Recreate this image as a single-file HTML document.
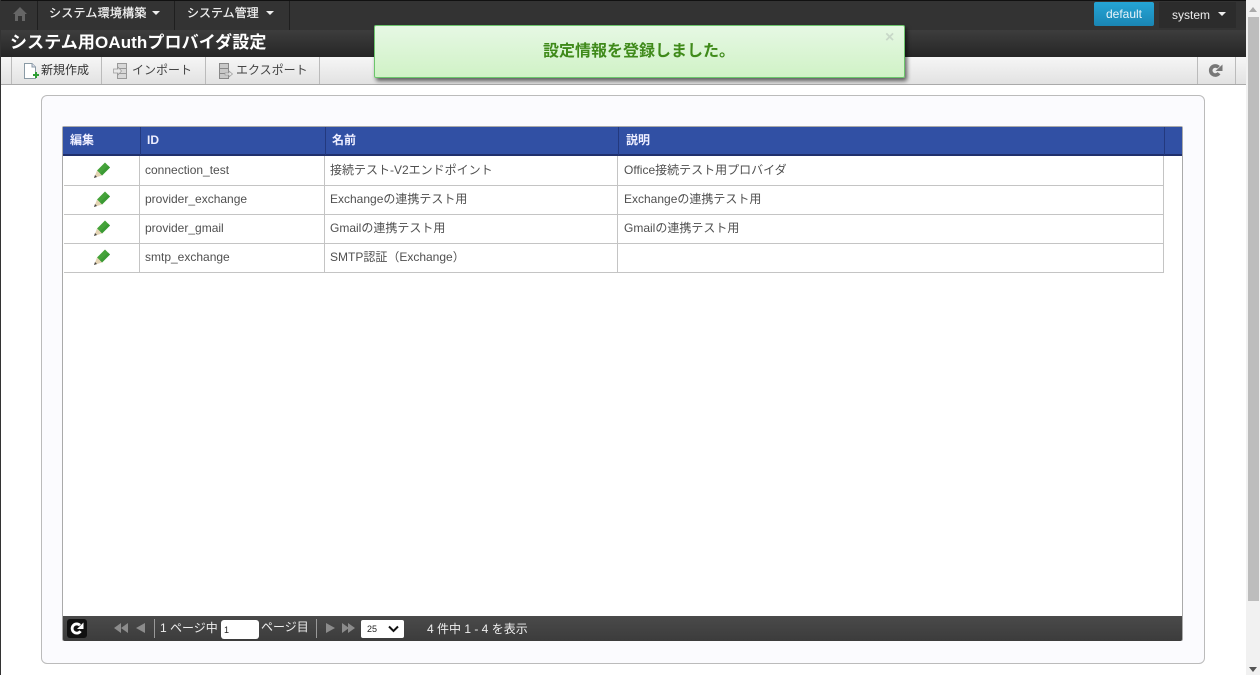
<!DOCTYPE html>
<html lang="ja"><head><meta charset="utf-8"><title>システム用OAuthプロバイダ設定</title>
<style>
html,body{margin:0;padding:0;width:1260px;height:675px;overflow:hidden;background:#fff}
body{position:relative;font-family:"Liberation Sans","Noto Sans CJK JP",sans-serif;color:#444}
.a{position:absolute;white-space:nowrap}
.sep{position:absolute;width:1px}
svg{position:absolute;display:block}
.caret{position:absolute;width:0;height:0;border-left:4px solid transparent;border-right:4px solid transparent;border-top:4px solid #eee}
.hl{position:absolute;height:1px;left:64px;width:1100px;background:#c4c4c4}
.vl{position:absolute;width:1px;top:156px;height:116px;background:#c4c4c4}
.t{position:absolute;white-space:nowrap;font-size:12px;line-height:16px;color:#505050}
.th{position:absolute;white-space:nowrap;font-size:12px;font-weight:bold;color:#eef;line-height:16px;top:132px}
.tb{position:absolute;white-space:nowrap;font-size:12px;color:#444;line-height:16px;top:62px}
</style></head><body>
<!-- top bar -->
<div class="a" style="left:0;top:0;width:1246px;height:30px;background:#333;border-top:1px solid #111;box-sizing:border-box"></div>
<div class="a" style="left:0;top:0;width:1px;height:675px;background:#333"></div>
<div class="sep" style="left:37px;top:1px;height:29px;background:#1f1f1f"></div>
<div class="sep" style="left:174px;top:1px;height:29px;background:#1f1f1f"></div>
<div class="sep" style="left:289px;top:1px;height:29px;background:#1f1f1f"></div>
<svg style="left:12px;top:6px" width="16" height="16" viewBox="0 0 16 16"><path d="M8 1 L15 8 L13 8 L13 15 L10 15 L10 10 L6 10 L6 15 L3 15 L3 8 L1 8 Z" fill="#666"/></svg>
<div class="a" style="left:49px;top:5px;font-size:12px;line-height:16px;color:#f4f4f4;letter-spacing:.25px;-webkit-text-stroke:.2px #f4f4f4">システム環境構築</div>
<div class="caret" style="left:152px;top:11px"></div>
<div class="a" style="left:187px;top:5px;font-size:12px;line-height:16px;color:#f4f4f4;-webkit-text-stroke:.2px #f4f4f4">システム管理</div>
<div class="caret" style="left:266px;top:11px"></div>
<div class="a" style="left:1094px;top:2px;width:60px;height:24px;border-radius:2px;background:linear-gradient(#25a5d6,#1a86b4);color:#e8f4fa;font-size:12px;line-height:25px;text-align:center">default</div>
<div class="a" style="left:1159px;top:2px;width:77px;height:26px;background:#2c2c2c"></div>
<div class="a" style="left:1172px;top:7px;font-size:12px;line-height:16px;color:#eee">system</div>
<div class="caret" style="left:1218px;top:12px"></div>
<!-- title bar -->
<div class="a" style="left:1px;top:30px;width:1245px;height:27px;background:linear-gradient(#3d3d3d,#262626)"></div>
<div class="a" style="left:10px;top:32px;font-size:17px;font-weight:bold;line-height:22px;color:#fff;letter-spacing:.1px">システム用OAuthプロバイダ設定</div>
<!-- toolbar -->
<div class="a" style="left:1px;top:57px;width:1245px;height:27px;background:linear-gradient(#f6f6f6,#e2e2e2);border-bottom:1px solid #aaa;box-sizing:content-box"></div>
<div class="sep" style="left:11px;top:57px;height:27px;background:#bbb"></div>
<div class="sep" style="left:101px;top:57px;height:27px;background:#bbb"></div>
<div class="sep" style="left:205px;top:57px;height:27px;background:#bbb"></div>
<div class="sep" style="left:319px;top:57px;height:27px;background:#bbb"></div>
<div class="sep" style="left:1197px;top:57px;height:27px;background:#bbb"></div>
<div class="sep" style="left:1235px;top:57px;height:27px;background:#bbb"></div>
<svg style="left:23px;top:62px" width="16" height="18" viewBox="0 0 16 18"><path d="M1.5 1.5 H9 L12.5 5 V16.5 H1.5 Z" fill="#fff" stroke="#8a9aa5"/><path d="M9 1.5 V5 H12.5" fill="#dde" stroke="#8a9aa5"/><path d="M10 12 h2 v-2 h2 v2 h2 v2 h-2 v2 h-2 v-2 h-2 Z" fill="#2e9e35"/></svg>
<div class="tb" style="left:41px;color:#333">新規作成</div>
<svg style="left:113px;top:63px" width="15" height="16" viewBox="0 0 15 16"><rect x="4.5" y=".5" width="9" height="15" fill="#d8d8d8" stroke="#999"/><path d="M4.5 5.5 H13.5 M4.5 10.5 H13.5" stroke="#999"/><path d="M.5 6 H5 V4 L8.5 8 L5 12 V10 H.5 Z" fill="#e8e8e8" stroke="#999" stroke-width=".7"/></svg>
<div class="tb" style="left:132px">インポート</div>
<svg style="left:218px;top:63px" width="15" height="16" viewBox="0 0 15 16"><rect x="1.5" y=".5" width="9" height="15" fill="#c8c8c8" stroke="#888"/><path d="M1.5 5.5 H10.5 M1.5 10.5 H10.5" stroke="#888"/><path d="M7 10 H11 V8 L14.5 11 L11 14 V12 H7 Z" fill="#e8e8e8" stroke="#999" stroke-width=".7"/></svg>
<div class="tb" style="left:236px">エクスポート</div>
<svg style="left:1208px;top:63px" width="15" height="15" viewBox="0 0 15 15"><path d="M11 10.2 A4.6 4.6 0 1 1 10.6 4.3" fill="none" stroke="#777" stroke-width="3.6"/><path d="M14.5 1.5 V8 H7.5 Z" fill="#777"/></svg>
<!-- panel -->
<div class="a" style="left:41px;top:95px;width:1162px;height:567px;background:#fbfbfe;border:1px solid #bbb;border-radius:6px"></div>
<!-- grid -->
<div class="a" style="left:62px;top:126px;width:1119px;height:513px;background:#fff;border:1px solid #aaa;border-radius:2px"></div>
<div class="a" style="left:63px;top:127px;width:1119px;height:27px;background:#3150a4;border-bottom:2px solid #20306c"></div>
<div class="sep" style="left:140px;top:127px;height:28px;background:#23397e"></div>
<div class="sep" style="left:325px;top:127px;height:28px;background:#23397e"></div>
<div class="sep" style="left:618px;top:127px;height:28px;background:#23397e"></div>
<div class="sep" style="left:1164px;top:127px;height:28px;background:#23397e"></div>
<div class="th" style="left:70px">編集</div>
<div class="th" style="left:147px">ID</div>
<div class="th" style="left:332px">名前</div>
<div class="th" style="left:626px">説明</div>
<!-- rows -->
<div class="hl" style="top:185px"></div><div class="hl" style="top:214px"></div><div class="hl" style="top:243px"></div><div class="hl" style="top:272px"></div>
<div class="vl" style="left:139px"></div><div class="vl" style="left:324px"></div><div class="vl" style="left:617px"></div><div class="vl" style="left:1163px"></div>
<svg style="left:93px;top:162px" width="18" height="17" viewBox="0 0 18 17"><path d="M4 8.5 L12 .5 L17 5.5 L9 13.5 Z" fill="#45a33a"/><path d="M7 11.5 L15 3.5 L17 5.5 L9 13.5 Z" fill="#3b9a34"/><path d="M1 16 L4 8.5 L9 13.5 Z" fill="#e3d3b3"/><path d="M1 16 L2 13 L4 15 Z" fill="#444"/></svg>
<svg style="left:93px;top:191px" width="18" height="17" viewBox="0 0 18 17"><path d="M4 8.5 L12 .5 L17 5.5 L9 13.5 Z" fill="#45a33a"/><path d="M7 11.5 L15 3.5 L17 5.5 L9 13.5 Z" fill="#3b9a34"/><path d="M1 16 L4 8.5 L9 13.5 Z" fill="#e3d3b3"/><path d="M1 16 L2 13 L4 15 Z" fill="#444"/></svg>
<svg style="left:93px;top:220px" width="18" height="17" viewBox="0 0 18 17"><path d="M4 8.5 L12 .5 L17 5.5 L9 13.5 Z" fill="#45a33a"/><path d="M7 11.5 L15 3.5 L17 5.5 L9 13.5 Z" fill="#3b9a34"/><path d="M1 16 L4 8.5 L9 13.5 Z" fill="#e3d3b3"/><path d="M1 16 L2 13 L4 15 Z" fill="#444"/></svg>
<svg style="left:93px;top:249px" width="18" height="17" viewBox="0 0 18 17"><path d="M4 8.5 L12 .5 L17 5.5 L9 13.5 Z" fill="#45a33a"/><path d="M7 11.5 L15 3.5 L17 5.5 L9 13.5 Z" fill="#3b9a34"/><path d="M1 16 L4 8.5 L9 13.5 Z" fill="#e3d3b3"/><path d="M1 16 L2 13 L4 15 Z" fill="#444"/></svg>
<div class="t" style="left:145px;top:162px">connection_test</div>
<div class="t" style="left:330px;top:162px">接続テスト-V2エンドポイント</div>
<div class="t" style="left:624px;top:162px">Office接続テスト用プロバイダ</div>
<div class="t" style="left:145px;top:191px">provider_exchange</div>
<div class="t" style="left:330px;top:191px">Exchangeの連携テスト用</div>
<div class="t" style="left:624px;top:191px">Exchangeの連携テスト用</div>
<div class="t" style="left:145px;top:220px">provider_gmail</div>
<div class="t" style="left:330px;top:220px">Gmailの連携テスト用</div>
<div class="t" style="left:624px;top:220px">Gmailの連携テスト用</div>
<div class="t" style="left:145px;top:249px">smtp_exchange</div>
<div class="t" style="left:330px;top:249px">SMTP認証（Exchange）</div>
<!-- pager -->
<div class="a" style="left:63px;top:616px;width:1119px;height:25px;background:linear-gradient(#4a4a4a,#3c3c3c);border-radius:0 0 2px 2px"></div>
<div class="a" style="left:67px;top:619px;width:20px;height:19px;background:#111;border-radius:3px"></div>
<svg style="left:69px;top:621px" width="16" height="15" viewBox="0 0 16 15"><path d="M11.5 10.2 A4.6 4.6 0 1 1 11 4.3" fill="none" stroke="#fff" stroke-width="2.8"/><path d="M14.5 1.5 V8 H8 Z" fill="#fff"/></svg>
<svg style="left:113px;top:623px" width="33" height="10" viewBox="0 0 33 10"><path d="M8 0 V10 L1 5 Z M15 0 V10 L8 5 Z M32 0 V10 L23 5 Z" fill="#8c8c8c"/></svg>
<div class="sep" style="left:154px;top:619px;height:19px;background:#999"></div>
<div class="a" style="left:160px;top:620px;font-size:12px;line-height:16px;color:#eee">1 ページ中</div>
<div class="a" style="left:221px;top:620px;width:38px;height:19px;background:#fff;border-radius:3px;box-sizing:border-box;padding:4px 0 0 3px;font-size:9px;line-height:12px;color:#222">1</div>
<div class="a" style="left:261px;top:619px;font-size:12px;line-height:16px;color:#eee">ページ目</div>
<div class="sep" style="left:316px;top:619px;height:19px;background:#999"></div>
<svg style="left:325px;top:623px" width="31" height="10" viewBox="0 0 31 10"><path d="M1 0 V10 L10 5 Z M17 0 V10 L24 5 Z M23 0 V10 L30 5 Z" fill="#8c8c8c"/></svg>
<div class="a" style="left:361px;top:620px;width:43px;height:18px;background:#fff;border-radius:2px;box-sizing:border-box;padding:3px 0 0 6px;font-size:9px;line-height:12px;color:#222">25</div>
<svg style="left:388px;top:625px" width="11" height="8" viewBox="0 0 11 8"><path d="M1 1.5 L5.5 6 L10 1.5" fill="none" stroke="#111" stroke-width="2"/></svg>
<div class="a" style="left:427px;top:621px;font-size:12px;line-height:16px;color:#eee">4 件中 1 - 4 を表示</div>
<!-- notification -->
<div class="a" style="left:374px;top:25px;width:529px;height:51px;background:linear-gradient(#e6f8e4,#d0f2c6);border:1px solid #6cc56c;border-radius:2px;box-shadow:2px 3px 4px rgba(0,0,0,.6)"></div>
<div class="a" style="left:543px;top:41.5px;font-size:16px;font-weight:bold;line-height:20px;color:#3f8a1a">設定情報を登録しました。</div>
<div class="a" style="left:885px;top:30px;font-size:16px;font-weight:bold;line-height:16px;color:#c8d8c8">×</div>
<!-- scrollbar -->
<div class="a" style="left:1246px;top:0;width:14px;height:675px;background:#f1f1f1"></div>
<div class="a" style="left:1248px;top:17px;width:11px;height:584px;background:#bdbdbd"></div>
<div class="a" style="left:1249px;top:7px;width:0;height:0;border-left:4px solid transparent;border-right:4px solid transparent;border-bottom:5px solid #aaa"></div>
<div class="a" style="left:1249px;top:667px;width:0;height:0;border-left:4px solid transparent;border-right:4px solid transparent;border-top:5px solid #555"></div>
</body></html>
